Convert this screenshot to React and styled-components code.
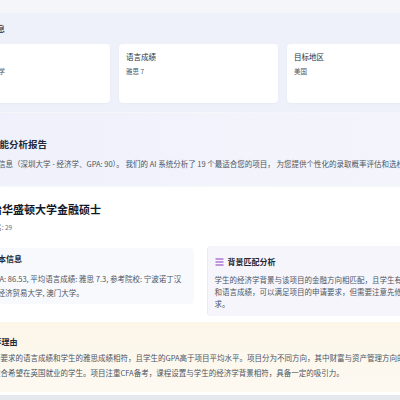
import React from "react";
import styled, { createGlobalStyle } from "styled-components";

const GlobalStyle = createGlobalStyle`
  html, body {
    margin: 0;
    padding: 0;
    background: #f4f6fa;
    overflow: hidden;
  }
  body {
    font-family: "Noto Sans CJK SC", "Noto Sans", "Liberation Sans", sans-serif;
    color: #1f2937;
  }
`;

const Page = styled.div`
  width: 540px;
  margin-left: -70px;
  padding-top: 13px;
`;

/* applicant summary */
const InfoSection = styled.section`
  background: #eef1fa;
  padding: 9px 21px 9px;
`;

const SectionTitle = styled.h3`
  display: flex;
  align-items: center;
  gap: 8px;
  margin: 0 0 8px;
  font-size: 8px;
  line-height: 12px;
  font-weight: 500;
  color: #1f2937;
`;

const CardGrid = styled.div`
  display: grid;
  grid-template-columns: repeat(3, 159px);
  gap: 9px;
`;

const InfoCard = styled.div`
  height: 59px;
  box-sizing: border-box;
  padding: 8px 7px;
  background: #fff;
  border-radius: 4px;
  box-shadow: 0 1px 2px rgba(30, 41, 80, 0.04);
`;

const CardLabel = styled.div`
  font-size: 7.5px;
  line-height: 10px;
  color: #2b2f38;
`;

const CardValue = styled.div`
  margin-top: 5px;
  font-size: 6.5px;
  line-height: 9px;
  color: #4b5563;
`;

/* report intro */
const ReportSection = styled.section`
  margin-top: 1px;
  padding: 25px 21px 16px 38px;
  background: linear-gradient(90deg, #eef0fb 0%, #f2f3fb 55%, #f5f6fc 100%);
`;

const ReportTitle = styled.h2`
  display: flex;
  align-items: center;
  gap: 11px;
  margin: 0 0 7px;
  font-size: 9.5px;
  line-height: 13px;
  font-weight: 700;
  color: #1f2937;
`;

const ReportText = styled.p`
  margin: 0;
  font-size: 7.5px;
  line-height: 11px;
  color: #4b5563;
  white-space: nowrap;
`;

/* program card */
const ProgramCard = styled.article`
  margin-top: 2px;
  padding: 15px 24px 3px;
  background: #fff;
  border-bottom: 5px solid #e6e8ef;
`;

const ProgramHeader = styled.header`
  display: flex;
  align-items: center;
  gap: 6px;
`;

const SchoolLogo = styled.div`
  width: 20px;
  height: 20px;
  border-radius: 4px;
  background: #1e3a8a;
  color: #fff;
  font-size: 6px;
  font-weight: 700;
  display: grid;
  place-items: center;
`;

const ProgramTitle = styled.h1`
  margin: 0;
  font-size: 11px;
  line-height: 15px;
  font-weight: 700;
  color: #111827;
`;

const ProgramMeta = styled.div`
  margin-top: 6px;
  font-size: 6.5px;
  line-height: 9px;
  color: #6b7280;
`;

const BoxRow = styled.div`
  display: grid;
  grid-template-columns: 1fr 1fr;
  gap: 13px;
  margin-top: 14px;
  align-items: start;
`;

const InfoBox = styled.div`
  border-radius: 4px;
  padding: ${(p) => (p.$tone === "purple" ? "10px 7px 6px" : "5px 6px 4px")};
  margin-top: ${(p) => (p.$tone === "purple" ? "0" : "2px")};
  background: ${(p) => (p.$tone === "purple" ? "#f7f5fc" : "#f8f9fc")};
  border-left: ${(p) => (p.$tone === "purple" ? "1px solid #ece7f7" : "none")};
`;

const BoxTitle = styled.div`
  display: flex;
  align-items: center;
  gap: 4px;
  font-size: 8px;
  line-height: 12px;
  font-weight: 700;
  color: #1f2937;
  margin-bottom: ${(p) => p.$space || 6}px;
`;

const BoxText = styled.p`
  margin: 0;
  font-size: 7.5px;
  line-height: ${(p) => p.$lh || 12}px;
  color: #4b5563;
`;

const ReasonBox = styled.div`
  margin-top: 6px;
  padding: 14px 10px 12px 9px;
  border-radius: 4px;
  background: linear-gradient(180deg, #fcf6e8 0%, #fdf8ee 60%, #fdf9f1 100%);
`;

const ListIcon = () => (
  <svg width="9" height="8" viewBox="0 0 9 8" fill="none" stroke="#9b59c6" strokeWidth="1.2">
    <line x1="0.5" y1="1" x2="8.5" y2="1" />
    <line x1="0.5" y1="4" x2="8.5" y2="4" />
    <line x1="0.5" y1="7" x2="8.5" y2="7" />
  </svg>
);

const InfoIcon = () => (
  <svg width="10" height="10" viewBox="0 0 24 24" fill="none" stroke="#3b82f6" strokeWidth="2">
    <circle cx="12" cy="12" r="10" />
    <path d="M12 16v-4M12 8h.01" />
  </svg>
);

const StarIcon = () => (
  <svg width="9" height="9" viewBox="0 0 24 24" fill="#f59e0b">
    <path d="M12 2l3 7 7 .6-5.3 4.6 1.6 7L12 17.5 5.7 21.2l1.6-7L2 9.6 9 9z" />
  </svg>
);

const ChartIcon = () => (
  <svg width="11" height="11" viewBox="0 0 24 24" fill="none" stroke="#6366f1" strokeWidth="2">
    <path d="M3 3v18h18" />
    <path d="M7 15l4-4 3 3 5-6" />
  </svg>
);

const UserIcon = () => (
  <svg width="14" height="14" viewBox="0 0 24 24" fill="none" stroke="#6366f1" strokeWidth="2">
    <circle cx="12" cy="8" r="4" />
    <path d="M4 21c0-4 4-6 8-6s8 2 8 6" />
  </svg>
);

const cards = [
  { label: "本科背景", value: "深圳大学 经济学" },
  { label: "语言成绩", value: "雅思 7" },
  { label: "目标地区", value: "美国" },
];

export default function App() {
  return (
    <>
      <GlobalStyle />
      <Page>
        <InfoSection>
          <SectionTitle>
            <UserIcon />
            基本信息
          </SectionTitle>
          <CardGrid>
            {cards.map((c) => (
              <InfoCard key={c.label}>
                <CardLabel>{c.label}</CardLabel>
                <CardValue>{c.value}</CardValue>
              </InfoCard>
            ))}
          </CardGrid>
        </InfoSection>

        <ReportSection>
          <ReportTitle>
            <ChartIcon />
            智能分析报告
          </ReportTitle>
          <ReportText>
            基于您的信息（深圳大学 - 经济学、GPA: 90）。 我们的 AI 系统分析了 19 个最适合您的项目， 为您提供个性化的录取概率评估和选校建议。
          </ReportText>
        </ReportSection>

        <ProgramCard>
          <ProgramHeader>
            <SchoolLogo>GW</SchoolLogo>
            <div>
              <ProgramTitle>乔治华盛顿大学金融硕士</ProgramTitle>
              <ProgramMeta>QS排名: 29</ProgramMeta>
            </div>
          </ProgramHeader>

          <BoxRow>
            <InfoBox>
              <BoxTitle $space={7}>
                <InfoIcon />
                项目基本信息
              </BoxTitle>
              <BoxText $lh={14}>
                录取平均GPA: 86.53, 平均语言成绩: 雅思 7.3, 参考院校: 宁波诺丁汉大学、对外经济贸易大学, 澳门大学。
              </BoxText>
            </InfoBox>
            <InfoBox $tone="purple">
              <BoxTitle>
                <ListIcon />
                背景匹配分析
              </BoxTitle>
              <BoxText>
                学生的经济学背景与该项目的金融方向相匹配，且学生有较高绩点和语言成绩，可以满足项目的申请要求，但需要注意先修课程的要求。
              </BoxText>
            </InfoBox>
          </BoxRow>

          <ReasonBox>
            <BoxTitle $space={2}>
              <StarIcon />
              AI 推荐理由
            </BoxTitle>
            <BoxText $lh={15}>
              该项目申请要求的语言成绩和学生的雅思成绩相符，且学生的GPA高于项目平均水平。项目分为不同方向，其中财富与资产管理方向的课程内容设置较为适合希望在英国就业的学生。项目注重CFA备考，课程设置与学生的经济学背景相符，具备一定的吸引力。
            </BoxText>
          </ReasonBox>
        </ProgramCard>
      </Page>
    </>
  );
}
